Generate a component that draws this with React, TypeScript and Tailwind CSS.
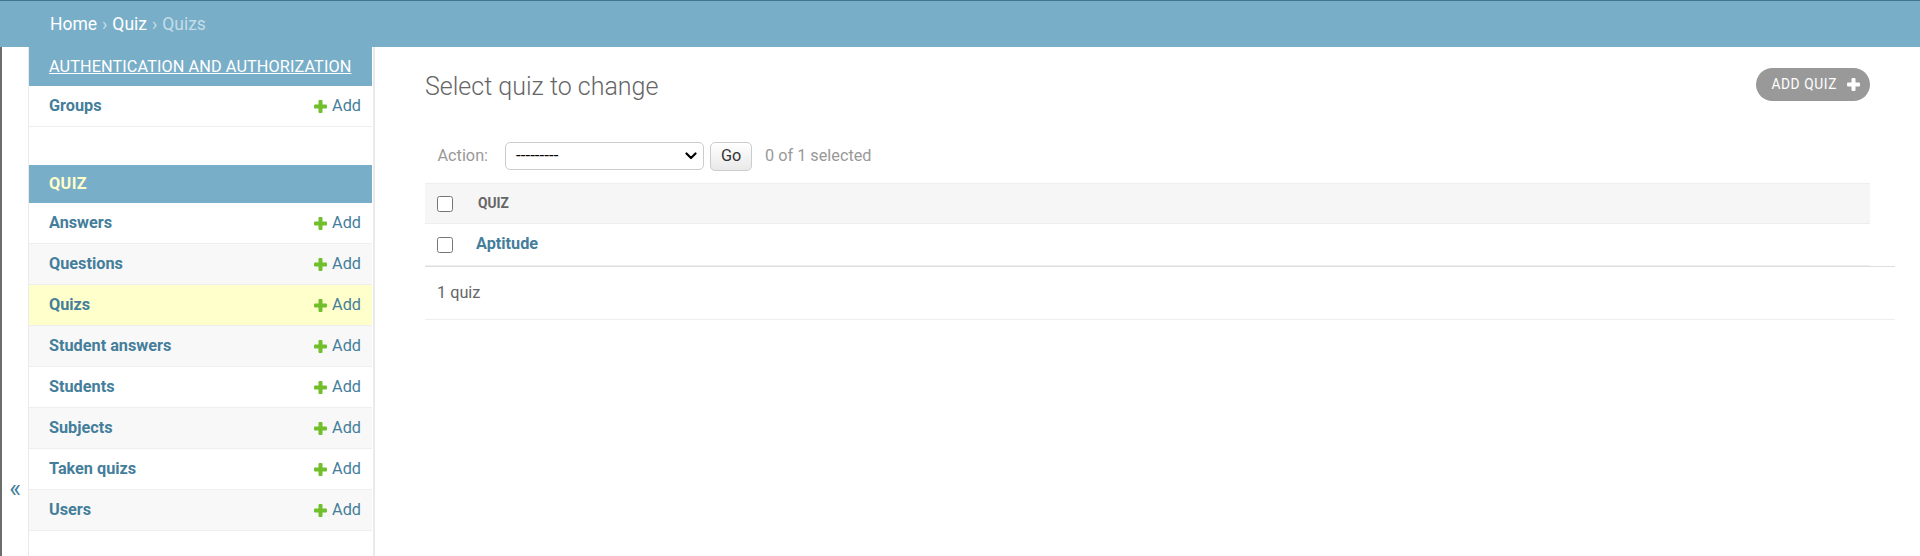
import React from "react";

const models = [
	{ name: "Answers", current: false },
	{ name: "Questions", current: false },
	{ name: "Quizs", current: true },
	{ name: "Student answers", current: false },
	{ name: "Students", current: false },
	{ name: "Subjects", current: false },
	{ name: "Taken quizs", current: false },
	{ name: "Users", current: false },
];

function PlusIcon({ color = "#70bf2b", size = 13 }: { color?: string; size?: number }) {
	return (
		<svg width={size} height={size} viewBox="0 0 13 13" className="shrink-0">
			<rect x="4.5" y="0" width="4" height="13" rx="1" fill={color} />
			<rect x="0" y="4.5" width="13" height="4" rx="1" fill={color} />
		</svg>
	);
}

function AddLink() {
	return (
		<span className="flex items-center gap-[5px] text-[#447e9b]">
			<PlusIcon />
			Add
		</span>
	);
}

function SidebarRow({ name, index, current }: { name: string; index: number; current?: boolean }) {
	const bg = current ? "bg-[#ffffcc]" : index % 2 === 0 ? "bg-white" : "bg-[#f8f8f8]";
	return (
		<div className={`flex h-[41px] items-center justify-between border-b border-[#eeeeee] pl-[20px] pr-[11px] ${bg}`}>
			<span className="font-bold text-[#447e9b]">{name}</span>
			<AddLink />
		</div>
	);
}

export default function App() {
	return (
		<div className="h-[556px] overflow-hidden bg-white font-[Roboto,sans-serif] text-[#333]">
			{/* Breadcrumbs */}
			<div className="flex h-[47px] items-center border-t border-[#417690] bg-[#79aec8] px-[50px] text-[17.5px] text-[#c4dce8]">
				<span className="text-white">Home</span>
				<span className="mx-[5px]">›</span>
				<span className="text-white">Quiz</span>
				<span className="mx-[5px]">›</span>
				<span>Quizs</span>
			</div>

			<div className="flex h-[509px]">
				{/* Sidebar toggle */}
				<div className="flex w-[29px] shrink-0 justify-center border-l-2 border-r border-l-[#6d6d6d] border-r-[#eaeaea] pt-[427px] text-[25px] leading-[29px] text-[#447e9b]">
					«
				</div>

				{/* Nav sidebar */}
				<nav className="w-[346px] shrink-0 border-r-2 border-[#eaeaea] pr-[1px] text-[16.25px]">
					<div className="flex h-[39px] items-center whitespace-nowrap bg-[#79aec8] px-[20px] pt-[2px] uppercase tracking-[0.1px] text-white underline">
						Authentication and Authorization
					</div>
					<SidebarRow name="Groups" index={0} />

					<div className="mt-[38px] flex h-[38px] items-center bg-[#79aec8] px-[20px] font-bold uppercase tracking-[0.4px] text-[#ffffcc]">
						Quiz
					</div>
					{models.map((m, i) => (
						<SidebarRow key={m.name} name={m.name} index={i} current={m.current} />
					))}
				</nav>

				{/* Content */}
				<main className="flex-1 px-[50px] pt-[25px]">
					<div className="flex items-start justify-between">
						<h1 className="text-[25px] font-light leading-[29px] text-[#666]">Select quiz to change</h1>
						<a className="-mt-[4px] flex h-[33px] items-center gap-[10px] rounded-full bg-[#999] pl-[15px] pr-[10px] text-[13.75px] uppercase tracking-[0.6px] text-white">
							Add quiz
							<PlusIcon color="#ffffff" size={13} />
						</a>
					</div>

					{/* Actions */}
					<div className="mt-[25px] flex h-[57px] items-center pl-[12.5px] pt-[3px] text-[16.25px] text-[#999]">
						<span>Action:</span>
						<div className="ml-[17px] flex h-[28px] w-[199px] items-center justify-between rounded-[5px] border border-[#cccccc] bg-white pl-[10px] pr-[6px] text-[17px] text-black">
							<span>---------</span>
							<svg width="12" height="8" viewBox="0 0 12 8">
								<path d="M1.5 1.5 L6 6 L10.5 1.5" fill="none" stroke="#000" strokeWidth="2.2" strokeLinecap="round" strokeLinejoin="round" />
							</svg>
						</div>
						<button className="ml-[6px] flex h-[29px] w-[42px] items-center justify-center rounded-[5px] border border-[#cccccc] bg-gradient-to-b from-white to-[#e9e9e9] text-[16.25px] text-[#333]">
							Go
						</button>
						<span className="ml-[13px]">0 of 1 selected</span>
					</div>

					{/* Results table */}
					<div className="border-t border-[#eeeeee]">
						<div className="flex h-[40px] items-center border-b border-[#eeeeee] bg-[#f6f6f6]">
							<div className="flex w-[53px] shrink-0 pl-[12px]">
								<input type="checkbox" className="m-0 h-4 w-4" />
							</div>
							<span className="text-[13.75px] font-bold uppercase text-[#666]">Quiz</span>
						</div>
						<div className="flex h-[42px] items-center border-b border-[#eeeeee]">
							<div className="flex w-[51px] shrink-0 pl-[12px]">
								<input type="checkbox" className="m-0 h-4 w-4" />
							</div>
							<span className="text-[16.25px] font-bold text-[#447e9b]">Aptitude</span>
						</div>
					</div>

					{/* Paginator */}
					<div className="-mr-[25px] flex h-[54px] items-center border-y border-t-[#dddddd] border-b-[#eeeeee] pl-[12px] text-[16.25px] text-[#666]">
						1 quiz
					</div>
				</main>
			</div>
		</div>
	);
}
